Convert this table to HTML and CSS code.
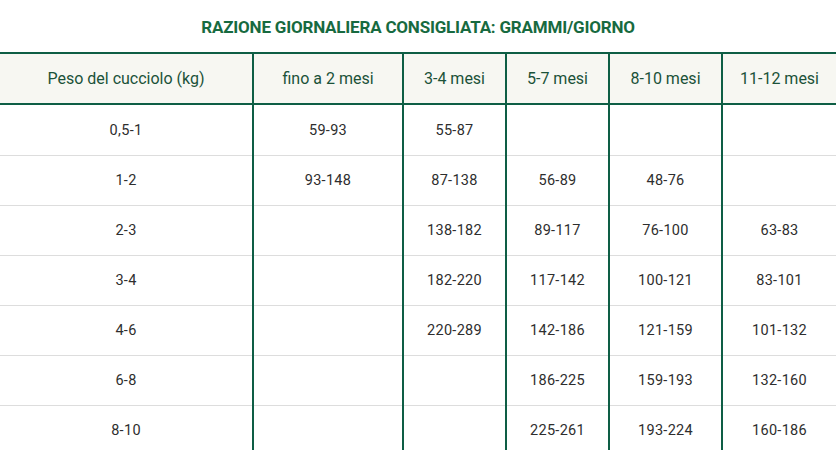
FILE: index.html
```html
<!DOCTYPE html>
<html lang="it">
<head>
<meta charset="utf-8">
<link rel="stylesheet" href="styles.css">
</head>
<body>
<h2 class="title">RAZIONE GIORNALIERA CONSIGLIATA: GRAMMI/GIORNO</h2>
<table class="ration">
  <colgroup>
    <col class="c1"><col class="c2"><col class="c3"><col class="c4"><col class="c5"><col class="c6">
  </colgroup>
  <thead>
    <tr>
      <th>Peso del cucciolo (kg)</th>
      <th>fino a 2 mesi</th>
      <th>3-4 mesi</th>
      <th>5-7 mesi</th>
      <th>8-10 mesi</th>
      <th>11-12 mesi</th>
    </tr>
  </thead>
  <tbody>
    <tr><td>0,5-1</td><td>59-93</td><td>55-87</td><td></td><td></td><td></td></tr>
    <tr><td>1-2</td><td>93-148</td><td>87-138</td><td>56-89</td><td>48-76</td><td></td></tr>
    <tr><td>2-3</td><td></td><td>138-182</td><td>89-117</td><td>76-100</td><td>63-83</td></tr>
    <tr><td>3-4</td><td></td><td>182-220</td><td>117-142</td><td>100-121</td><td>83-101</td></tr>
    <tr><td>4-6</td><td></td><td>220-289</td><td>142-186</td><td>121-159</td><td>101-132</td></tr>
    <tr><td>6-8</td><td></td><td></td><td>186-225</td><td>159-193</td><td>132-160</td></tr>
    <tr><td>8-10</td><td></td><td></td><td>225-261</td><td>193-224</td><td>160-186</td></tr>
  </tbody>
</table>
</body>
</html>
```
FILE: styles.css
```css
html, body {
  margin: 0;
  padding: 0;
  background: #ffffff;
}
body {
  font-family: Roboto, "Liberation Sans", sans-serif;
  width: 836px;
  overflow: hidden;
}
.title {
  margin: 0;
  height: 52px;
  line-height: 54px;
  text-align: center;
  font-size: 17px;
  font-weight: 700;
  color: #176a40;
  letter-spacing: -0.2px;
}
.ration {
  border-collapse: collapse;
  table-layout: fixed;
  width: 836px;
}
.c1 { width: 253px; }
.c2 { width: 150px; }
.c3 { width: 103px; }
.c4 { width: 103px; }
.c5 { width: 113px; }
.c6 { width: 114px; }
.ration th {
  height: 49px;
  padding: 0;
  background: #f7f7f2;
  color: #1b5239;
  font-weight: 400;
  font-size: 16px;
  text-align: center;
  border-top: 2px solid #0e5e45;
  border-bottom: 2px solid #0e5e45;
  border-left: 2px solid #0e5e45;
}
.ration td {
  height: 49px;
  padding: 0;
  text-align: center;
  font-size: 14.5px;
  letter-spacing: 0.3px;
  color: #2e2e2e;
  border-bottom: 1px solid #dddddd;
  border-left: 2px solid #0e5e45;
}
.ration tbody tr:first-child td {
  height: 50px;
}
.ration th:first-child,
.ration td:first-child {
  border-left: none;
}
```
